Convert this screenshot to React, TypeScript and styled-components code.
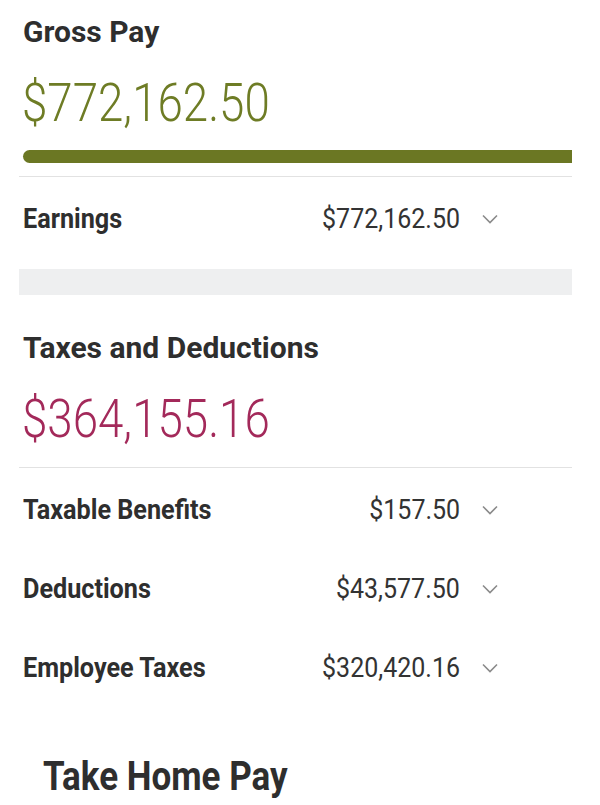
import React from 'react';
import styled, { createGlobalStyle } from 'styled-components';

const GlobalStyle = createGlobalStyle`
  body {
    margin: 0;
    background: #ffffff;
    font-family: Roboto, "Noto Sans", Arial, sans-serif;
    color: #2e2e2e;
  }
`;

const Page = styled.div`
  width: 553px;
  margin-left: 19px;
  overflow: hidden;
  height: 805px;
`;

const Section = styled.section`
  display: flex;
  flex-direction: column;
`;

const Title = styled.h2<{ top: number }>`
  margin: ${({ top }) => top}px 0 0 4px;
  font-size: 30px;
  line-height: 36px;
  font-weight: 700;
  color: #2e2e2e;
`;

const Amount = styled.div<{ color: string }>`
  align-self: flex-start;
  margin: 21px 0 0 3px;
  font-size: 54px;
  line-height: 64px;
  font-weight: 300;
  color: ${({ color }) => color};
  transform: scaleX(0.846);
  transform-origin: left center;
`;

const Bar = styled.div`
  margin: 15px 0 0 4px;
  height: 13px;
  border-radius: 7px 0 0 7px;
  background: #6b7723;
`;

const Divider = styled.hr<{ top: number }>`
  margin: ${({ top }) => top}px 0 0;
  border: none;
  height: 1px;
  background: #e2e2e2;
`;

const Band = styled.div`
  margin-top: 13px;
  height: 26px;
  background: #eeeff0;
`;

const Row = styled.div`
  display: flex;
  align-items: center;
  padding: 27px 74px 22px 4px;
  line-height: 30px;
`;

const Label = styled.span`
  flex: 1;
  font-size: 28px;
  font-weight: 700;
  color: #2e2e2e;
  transform: scaleX(0.9);
  transform-origin: left center;
`;

const Value = styled.span`
  font-size: 27px;
  font-weight: 400;
  color: #333333;
  transform: scaleX(0.926);
  transform-origin: right center;
`;

const Chevron = styled.svg`
  margin-left: 22px;
  width: 16px;
  height: 10px;
  flex-shrink: 0;
`;

const TakeHome = styled.h2`
  align-self: flex-start;
  margin: 47px 0 0 24px;
  font-size: 40px;
  line-height: 50px;
  font-weight: 700;
  color: #2e2e2e;
  transform: scaleX(0.875);
  transform-origin: left center;
`;

const ChevronDown = () => (
  <Chevron viewBox="0 0 16 10">
    <path d="M1 1.5 L8 8.5 L15 1.5" fill="none" stroke="#8a8a8a" strokeWidth="1.6" />
  </Chevron>
);

const LineItem = ({ label, value }: { label: string; value: string }) => (
  <Row>
    <Label>{label}</Label>
    <Value>{value}</Value>
    <ChevronDown />
  </Row>
);

const taxes = [
  { label: 'Taxable Benefits', value: '$157.50' },
  { label: 'Deductions', value: '$43,577.50' },
  { label: 'Employee Taxes', value: '$320,420.16' },
];

export default function App() {
  return (
    <>
      <GlobalStyle />
      <Page>
        <Section>
          <Title top={14}>Gross Pay</Title>
          <Amount color="#6e7c25">$772,162.50</Amount>
          <Bar />
          <Divider top={13} />
          <LineItem label="Earnings" value="$772,162.50" />
        </Section>
        <Band />
        <Section>
          <Title top={35}>Taxes and Deductions</Title>
          <Amount color="#a3295a">$364,155.16</Amount>
          <Divider top={16} />
          {taxes.map((t) => (
            <LineItem key={t.label} label={t.label} value={t.value} />
          ))}
          <TakeHome>Take Home Pay</TakeHome>
        </Section>
      </Page>
    </>
  );
}
